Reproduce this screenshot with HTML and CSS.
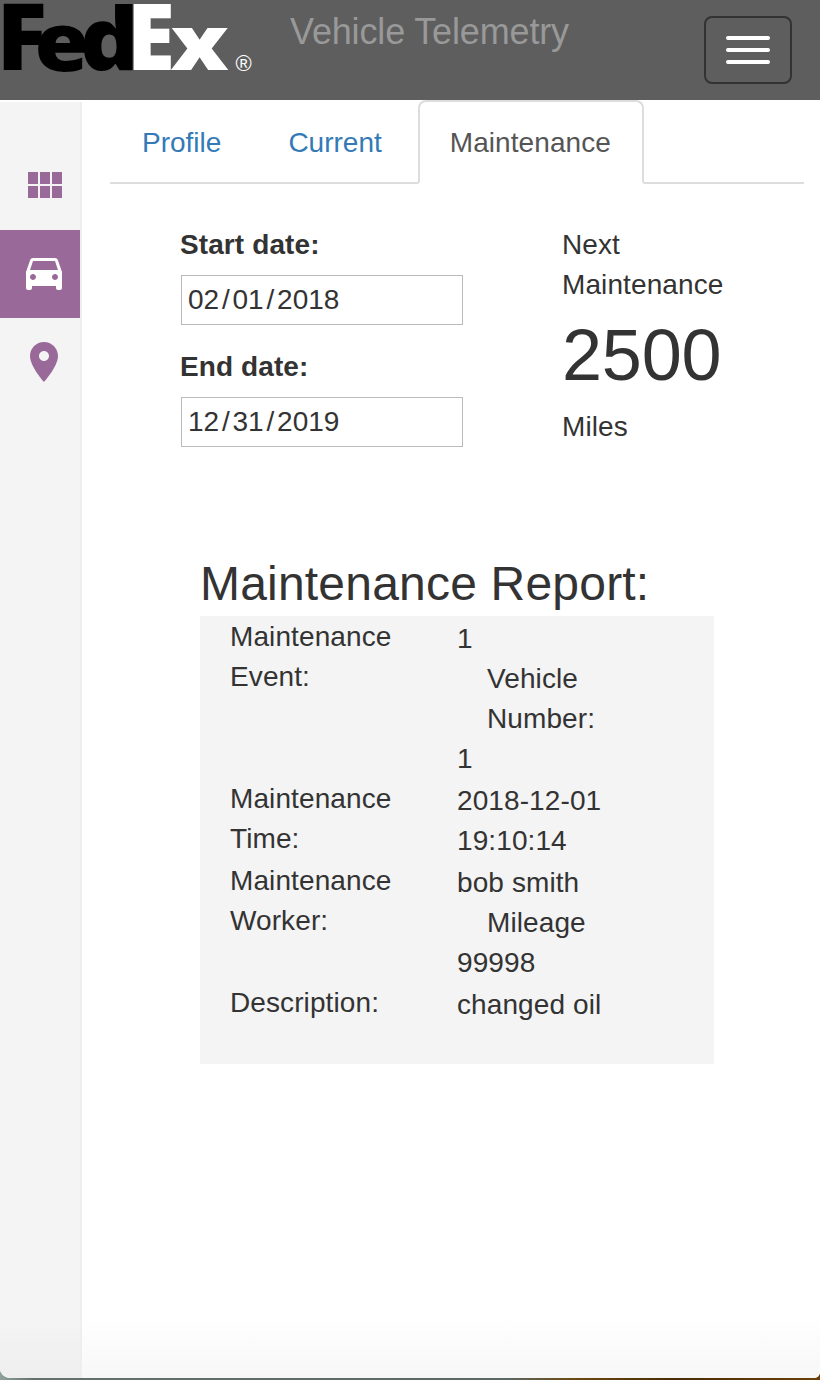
FILE: index.html
```html
<!DOCTYPE html>
<html lang="en">
<head>
<meta charset="utf-8">
<title>Vehicle Telemetry</title>
<link rel="stylesheet" href="styles.css">
</head>
<body>
<div class="window">
  <header class="navbar">
    <svg class="logo" width="260" height="100" viewBox="0 0 260 100" role="img" aria-label="FedEx">
      <g class="logo-fed">
        <text transform="translate(-3.500 70) scale(1.020 1)" font-size="92">F</text>
        <text transform="translate(34.500 70.500) scale(1.090 1)" font-size="81">e</text>
        <text transform="translate(80 70) scale(1.060 1)" font-size="86">d</text>
      </g>
      <g class="logo-ex">
        <text transform="translate(127 70) scale(.95 1)" font-size="92">E</text>
        <text transform="translate(170.500 70) scale(1.2 1)" font-size="77">x</text>
      </g>
      <text class="logo-reg" x="235.500" y="71">®</text>
    </svg>
    <h1 class="title">Vehicle Telemetry</h1>
    <button class="toggle" aria-label="Menu"><span></span><span></span><span></span></button>
  </header>
  <div class="layout">
    <nav class="sidebar">
      <a class="side-item"><svg width="34" height="26" viewBox="0 0 34 26"><path d="M0 0h10v12H0zM12 0h10v12H12zM24 0h10v12H24zM0 14h10v12H0zM12 14h10v12H12zM24 14h10v12H24z"/></svg></a>
      <a class="side-item active"><svg width="48" height="48" viewBox="0 0 24 24"><path d="M18.920 5.010C18.720 4.420 18.160 4 17.500 4h-11c-.66 0-1.210.42-1.420 1.010L3 11v8c0 .55.45 1 1 1h1c.55 0 1-.45 1-1v-1h12v1c0 .55.45 1 1 1h1c.55 0 1-.45 1-1v-8l-2.080-5.990zM6.500 15c-.83 0-1.500-.67-1.500-1.500S5.670 12 6.500 12s1.500.67 1.500 1.500S7.330 15 6.500 15zm11 0c-.83 0-1.500-.67-1.500-1.500s.67-1.500 1.500-1.500 1.500.67 1.500 1.500-.67 1.500-1.500 1.500zM5 10l1.500-4.500h11L19 10H5z"/></svg></a>
      <a class="side-item"><svg width="48" height="48" viewBox="0 0 24 24"><path d="M12 2C8.130 2 5 5.130 5 9c0 5.250 7 13 7 13s7-7.750 7-13c0-3.870-3.130-7-7-7zm0 9.500c-1.380 0-2.500-1.120-2.500-2.500s1.120-2.500 2.500-2.500 2.500 1.120 2.500 2.500-1.120 2.500-2.500 2.500z"/></svg></a>
    </nav>
    <main class="content">
      <ul class="tabs">
        <li class="tab">Profile</li>
        <li class="tab">Current</li>
        <li class="tab selected">Maintenance</li>
      </ul>
      <section class="summary">
        <div class="dates">
          <div class="label">Start date:</div>
          <div class="date-input">02<i>/</i>01<i>/</i>2018</div>
          <div class="label">End date:</div>
          <div class="date-input">12<i>/</i>31<i>/</i>2019</div>
        </div>
        <div class="next">
          <div>Next Maintenance</div>
          <div class="miles">2500</div>
          <div>Miles</div>
        </div>
      </section>
      <section class="report">
        <h2 class="report-title">Maintenance Report:</h2>
        <div class="report-box">
          <div class="row"><div>Maintenance Event:</div><div class="value"><div>1</div><div class="sub">Vehicle Number:</div><div>1</div></div></div>
          <div class="row"><div>Maintenance Time:</div><div class="value">2018-12-01 19:10:14</div></div>
          <div class="row"><div>Maintenance Worker:</div><div class="value"><div>bob smith</div><div class="sub">Mileage</div><div>99998</div></div></div>
          <div class="row"><div>Description:</div><div class="value">changed oil</div></div>
        </div>
      </section>
    </main>
  </div>
</div>
</body>
</html>
```
FILE: styles.css
```css
* { box-sizing: border-box; }
body {
  margin: 0;
  height: 1380px;
  overflow: hidden;
  background: linear-gradient(90deg, #8fa19d 0, #65706e 4%, #5c6664 62%, #6b4a10 70%, #4a2c05 82%, #6b4008 100%);
  font: 28px/40px "Liberation Sans", Arial, sans-serif;
  color: #333;
}
.window {
  height: 1378px;
  display: flex;
  flex-direction: column;
  overflow: hidden;
  background: #fff;
  border-radius: 0 0 6px 10px;
}
.navbar {
  height: 100px;
  display: flex;
  align-items: flex-start;
  background: #5e5e5e;
}
.logo { display: block; flex: none; overflow: visible; }
.logo text { font-family: "Open Sans", sans-serif; font-weight: 800; }
.logo-fed { fill: #000; }
.logo-ex { fill: #fff; }
.logo .logo-reg { font: 22px "Liberation Sans", sans-serif; fill: #fff; }
.title {
  margin: 12px 0 0 30px;
  font-size: 36px;
  line-height: 40px;
  font-weight: 400;
  letter-spacing: -.15px;
  color: #999;
}
.toggle {
  width: 88px;
  height: 68px;
  margin: 16px 28px 0 auto;
  padding: 0;
  display: flex;
  flex-direction: column;
  align-items: center;
  justify-content: center;
  gap: 8px;
  border: 2px solid #333;
  border-radius: 8px;
  background: none;
}
.toggle span { width: 44px; height: 4px; border-radius: 2px; background: #fff; }
.layout { flex: 1; display: flex; background: linear-gradient(#fff calc(100% - 60px), #f7f7f7); }
.sidebar {
  width: 82px;
  margin-top: 2px;
  padding-top: 40px;
  background: linear-gradient(#f4f4f4 calc(100% - 60px), #eee);
  border-right: 2px solid #eee;
}
.side-item {
  height: 88px;
  padding-left: 8px;
  display: flex;
  align-items: center;
  justify-content: center;
  fill: #996a99;
}
.side-item:first-child { padding-left: 10px; padding-bottom: 2px; }
.side-item.active { background: #996a99; fill: #fff; }
.content { flex: 1; padding: 0 16px 0 28px; }
.tabs {
  height: 84px;
  margin: 0;
  padding: 0;
  display: flex;
  gap: 3px;
  list-style: none;
  border-bottom: 2px solid #ddd;
}
.tab {
  height: 84px;
  padding: 21px 30px 19px;
  border: 2px solid transparent;
  border-radius: 8px 8px 0 0;
  color: #337ab7;
}
.tab.selected { width: 226px; margin-left: 1px; color: #555; background: #fff; border-color: #ddd #ddd #fff; letter-spacing: .08px; }
.summary { display: flex; height: 284px; padding: 41px 0 0 70px; }
.dates { width: 382px; }
.label { font-weight: 700; letter-spacing: .1px; }
.date-input {
  width: 282px;
  height: 50px;
  margin: 10px 0 22px 1px;
  padding: 4px 6px;
  line-height: 40px;
  border: 1px solid #bbb;
  background: #fff;
}
.date-input i { font-style: normal; padding: 0 2.8px; }
.next { width: 170px; letter-spacing: .1px; }
.miles { font-size: 72px; line-height: 100px; padding-bottom: 2px; letter-spacing: -.2px; }
.report { margin: 90px 90px 0; }
.report-title { margin: 0; height: 58px; font-size: 48px; line-height: 52px; font-weight: 400; letter-spacing: .2px; }
.report-box { height: 448px; padding: 1px 0 0 30px; background: #f4f4f4; letter-spacing: .1px; }
.row { display: grid; grid-template-columns: 227px 170px; }
.row > :first-child { width: 180px; }
.value { padding-top: 2px; }
.sub { padding-left: 30px; }
```
